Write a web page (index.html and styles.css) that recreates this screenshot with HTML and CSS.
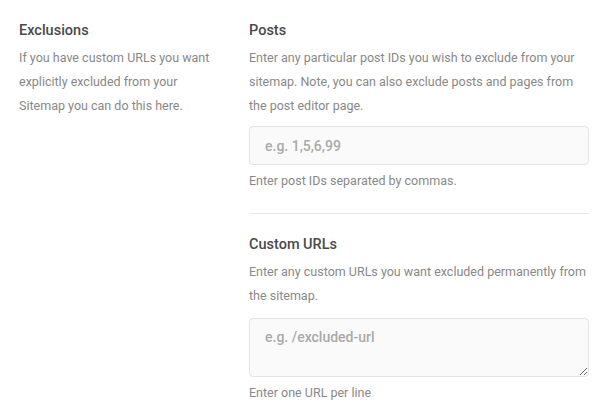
FILE: index.html
```html
<!DOCTYPE html>
<html lang="en">
  <head>
    <meta charset="UTF-8" />
    <meta name="viewport" content="width=device-width, initial-scale=1.0" />
    <title>Exclusions</title>
    <link rel="stylesheet" href="styles.css">
  </head>
  <body>
    <div class="settings-row">
      <div class="settings-intro">
        <h3 class="title">Exclusions</h3>
        <p class="desc">If you have custom URLs you want explicitly excluded from your Sitemap you can do this here.</p>
      </div>

      <div class="settings-fields">
        <div class="field">
          <h4 class="title">Posts</h4>
          <p class="desc">Enter any particular post IDs you wish to exclude from your sitemap. Note, you can also exclude posts and pages from the post editor page.</p>
          <input type="text" class="input" placeholder="e.g. 1,5,6,99" />
          <p class="hint">Enter post IDs separated by commas.</p>
        </div>

        <div class="field">
          <h4 class="title">Custom URLs</h4>
          <p class="desc">Enter any custom URLs you want excluded permanently from the sitemap.</p>
          <textarea class="input textarea" placeholder="e.g. /excluded-url"></textarea>
          <p class="hint">Enter one URL per line</p>
        </div>
      </div>
    </div>
  </body>
</html>
```

FILE: styles.css
```css
body {
  margin: 0;
  font-family: Roboto, "Liberation Sans", sans-serif;
  background-color: #ffffff;
}

.settings-row {
  display: flex;
  padding: 21px 21px 0 19px;
}

.settings-intro {
  width: 200px;
  margin-right: 30px;
  flex-shrink: 0;
}

.settings-fields {
  flex: 1;
}

.title {
  margin: 0;
  font-size: 14.5px;
  font-weight: 500;
  line-height: 20px;
  color: #4a4a4a;
}

.desc,
.hint {
  margin: 5px 0 0;
  font-size: 12.5px;
  line-height: 24px;
  color: #888888;
}

.hint {
  margin-top: 4px;
}

.field + .field {
  margin-top: 20px;
  padding-top: 21px;
  border-top: 1px solid #e8e8e8;
}

.input {
  display: block;
  box-sizing: border-box;
  width: 100%;
  height: 39px;
  margin-top: 8px;
  padding: 0 15px;
  border: 1px solid #e3e3e3;
  border-radius: 4px;
  background-color: #fafafa;
  font-family: inherit;
  font-size: 14px;
  font-weight: 500;
  color: #555555;
}

.input::placeholder {
  color: #aaaaaa;
}

.textarea {
  height: 59px;
  margin-top: 10px;
  padding-top: 10px;
  resize: vertical;
}
```
